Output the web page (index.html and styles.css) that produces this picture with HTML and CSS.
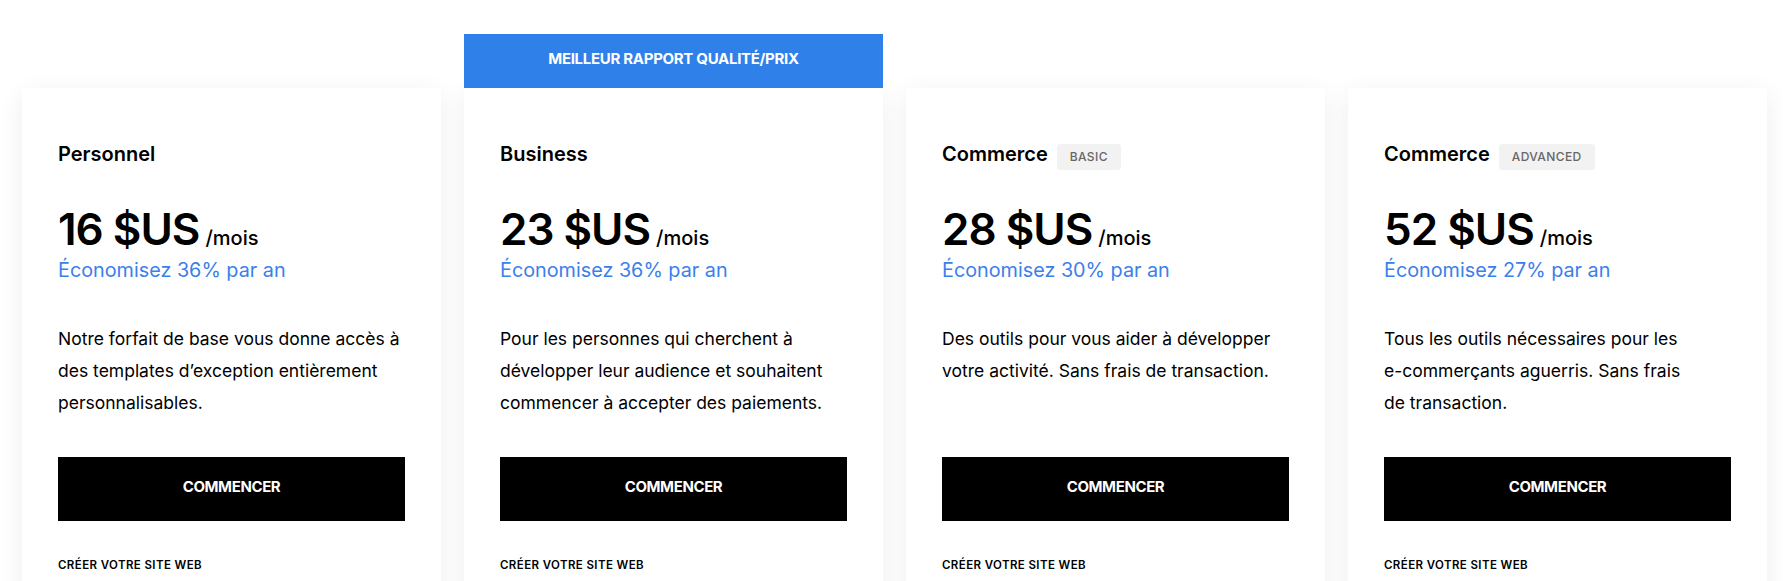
FILE: index.html
```html
<!DOCTYPE html>
<html lang="fr">
<head>
<meta charset="utf-8">
<title>Tarifs</title>
<link rel="stylesheet" href="styles.css">
</head>
<body>
<main class="plans">
  <section class="card">
    <h3 class="title">Personnel</h3>
    <div class="price"><span class="amount">16 $US</span><span class="per">/mois</span></div>
    <p class="save">Économisez 36% par an</p>
    <p class="desc">Notre forfait de base vous donne accès à des templates d’exception entièrement personnalisables.</p>
    <a class="btn">COMMENCER</a>
    <a class="link">CRÉER VOTRE SITE WEB</a>
  </section>
  <section class="card featured">
    <div class="ribbon">MEILLEUR RAPPORT QUALITÉ/PRIX</div>
    <h3 class="title">Business</h3>
    <div class="price"><span class="amount">23 $US</span><span class="per">/mois</span></div>
    <p class="save">Économisez 36% par an</p>
    <p class="desc">Pour les personnes qui cherchent à développer leur audience et souhaitent commencer à accepter des paiements.</p>
    <a class="btn">COMMENCER</a>
    <a class="link">CRÉER VOTRE SITE WEB</a>
  </section>
  <section class="card">
    <h3 class="title">Commerce <span class="tag">BASIC</span></h3>
    <div class="price"><span class="amount">28 $US</span><span class="per">/mois</span></div>
    <p class="save">Économisez 30% par an</p>
    <p class="desc">Des outils pour vous aider à développer votre activité. Sans frais de transaction.</p>
    <a class="btn">COMMENCER</a>
    <a class="link">CRÉER VOTRE SITE WEB</a>
  </section>
  <section class="card">
    <h3 class="title">Commerce <span class="tag">ADVANCED</span></h3>
    <div class="price"><span class="amount">52 $US</span><span class="per">/mois</span></div>
    <p class="save">Économisez 27% par an</p>
    <p class="desc">Tous les outils nécessaires pour les<br>e-commerçants aguerris. Sans frais<br>de transaction.</p>
    <a class="btn">COMMENCER</a>
    <a class="link">CRÉER VOTRE SITE WEB</a>
  </section>
</main>
</body>
</html>
```
FILE: styles.css
```css
* { box-sizing: border-box; }
html, body { margin: 0; padding: 0; background: #fff; }
body {
  font-family: Inter, "Liberation Sans", sans-serif;
  color: #000;
  overflow: hidden;
}
.plans {
  display: grid;
  grid-template-columns: repeat(4, 419px);
  column-gap: 23px;
  padding: 88px 0 0 22px;
  align-items: start;
}
.card {
  position: relative;
  background: #fff;
  padding: 52px 36px 60px;
  box-shadow: 0 6px 24px rgba(0, 0, 0, 0.07);
  display: flex;
  flex-direction: column;
}
.ribbon {
  position: absolute;
  left: 0;
  right: 0;
  bottom: 100%;
  height: 54px;
  background: #3080ea;
  color: #fff;
  font-size: 15px;
  font-weight: 700;
  letter-spacing: -0.3px;
  display: flex;
  align-items: center;
  justify-content: center;
  padding-bottom: 5px;
}
.title {
  margin: 0;
  height: 28px;
  font-size: 20px;
  line-height: 28px;
  font-weight: 600;
  display: flex;
  align-items: baseline;
  gap: 9px;
}
.tag {
  font-size: 12px;
  font-weight: 500;
  color: #666;
  background: #f2f2f2;
  border-radius: 3px;
  line-height: 26px;
  padding: 0 13px;
  letter-spacing: 0.4px;
}
.price {
  margin-top: 38.5px;
  display: flex;
  align-items: baseline;
  gap: 6px;
  line-height: 44px;
  height: 44px;
}
.amount {
  font-size: 44px;
  font-weight: 600;
  letter-spacing: -1px;
}
.per {
  font-size: 20px;
  font-weight: 500;
}
.save {
  margin: 5.5px 0 0;
  font-size: 19.8px;
  line-height: 28px;
  color: #3b80ea;
}
.desc {
  margin: 39px 0 0;
  font-size: 17.5px;
  line-height: 32px;
  min-height: 96px;
}
.btn {
  margin-top: 38px;
  height: 64px;
  background: #000;
  color: #fff;
  font-size: 15px;
  font-weight: 700;
  letter-spacing: -0.4px;
  display: flex;
  align-items: center;
  justify-content: center;
  padding-bottom: 6px;
}
.link {
  margin-top: 36px;
  font-size: 11.5px;
  line-height: 16px;
  font-weight: 600;
  letter-spacing: 0.4px;
}
```
